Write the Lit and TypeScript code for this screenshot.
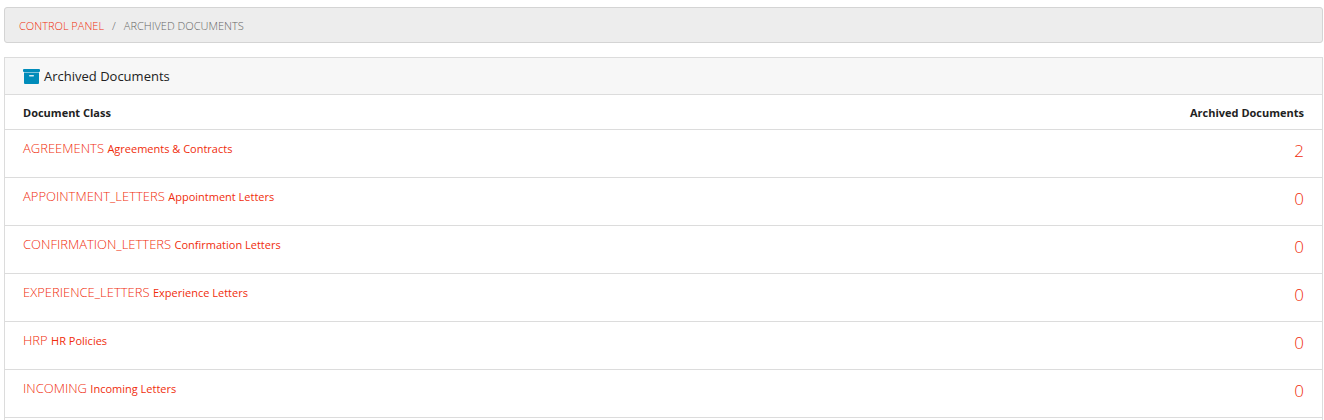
import { LitElement, html, css } from "lit";
import { customElement } from "lit/decorators.js";

interface DocumentClass {
  code: string;
  name: string;
  archived: number;
}

const CLASSES: DocumentClass[] = [
  { code: "AGREEMENTS", name: "Agreements & Contracts", archived: 2 },
  { code: "APPOINTMENT_LETTERS", name: "Appointment Letters", archived: 0 },
  { code: "CONFIRMATION_LETTERS", name: "Confirmation Letters", archived: 0 },
  { code: "EXPERIENCE_LETTERS", name: "Experience Letters", archived: 0 },
  { code: "HRP", name: "HR Policies", archived: 0 },
  { code: "INCOMING", name: "Incoming Letters", archived: 0 },
];

@customElement("app-root")
export class AppRoot extends LitElement {
  static styles = css`
    :host {
      display: flex;
      flex-direction: column;
      gap: 14px;
      box-sizing: border-box;
      min-height: 100vh;
      padding: 7px 1px 0 4px;
      background: #fff;
      color: #222;
      font-family: "Open Sans", sans-serif;
      font-size: 13px;
    }
    a {
      color: #f02d0c;
      text-decoration: none;
    }
    .breadcrumbs {
      display: flex;
      margin: 0;
      padding: 10px 14px 8px;
      list-style: none;
      border: 1px solid #d4d4d4;
      border-radius: 3px;
      background: #ededed;
      color: #666;
      font-size: 11px;
      font-weight: 300;
      line-height: 16px;
      text-transform: uppercase;
    }
    .crumb + .crumb::before {
      content: "/";
      margin: 0 8px;
    }
    .panel {
      flex: 1;
      border: 1px solid #dcdcdc;
      border-bottom: 0;
    }
    .title {
      display: flex;
      align-items: center;
      gap: 4px;
      margin: 0;
      padding: 8px 18px;
      background: #f7f7f7;
      font-size: 13px;
      font-weight: 400;
      line-height: 20px;
    }
    .icon {
      width: 17px;
      height: 15px;
    }
    .table {
      width: 100%;
      border-collapse: collapse;
    }
    .row {
      border-top: 1px solid #dcdcdc;
    }
    .row:last-child {
      border-bottom: 1px solid #dcdcdc;
    }
    .head {
      padding: 10px 18px 8px;
      font-size: 11px;
      font-weight: 700;
      line-height: 16px;
      text-align: left;
    }
    .cell {
      height: 38px;
      padding: 9px 18px 0;
      vertical-align: top;
      font-weight: 300;
      line-height: 18px;
    }
    .count {
      text-align: right;
    }
    .number {
      font-size: 17px;
      line-height: 24px;
    }
    .name {
      font-size: 11px;
      font-weight: 400;
    }
  `;

  render() {
    return html`
      <nav aria-label="Breadcrumb">
        <ol class="breadcrumbs">
          <li class="crumb"><a href="#">Control Panel</a></li>
          <li class="crumb">Archived Documents</li>
        </ol>
      </nav>
      <main class="panel">
        <h1 class="title">
          <svg class="icon" viewBox="0 0 17 15" aria-hidden="true">
            <rect width="17" height="3" rx="1" fill="#008cba" />
            <path fill="#7fc3dc" d="M1 3h15v1H1Z" />
            <path
              fill="#008cba"
              d="M1 4h15v10a1 1 0 0 1-1 1H2a1 1 0 0 1-1-1Z"
            />
            <rect x="6" y="6" width="5" height="1.500" rx=".7" fill="#d5ebf3" />
          </svg>
          Archived Documents
        </h1>
        <table class="table">
          <thead>
            <tr class="row">
              <th class="head" scope="col">Document Class</th>
              <th class="head count" scope="col">Archived Documents</th>
            </tr>
          </thead>
          <tbody>
            ${CLASSES.map(
              (c) => html`<tr class="row">
                <td class="cell">
                  <a href="#">${c.code} <small class="name">${c.name}</small></a>
                </td>
                <td class="cell count number"><a href="#">${c.archived}</a></td>
              </tr>`
            )}
          </tbody>
        </table>
      </main>
    `;
  }
}
